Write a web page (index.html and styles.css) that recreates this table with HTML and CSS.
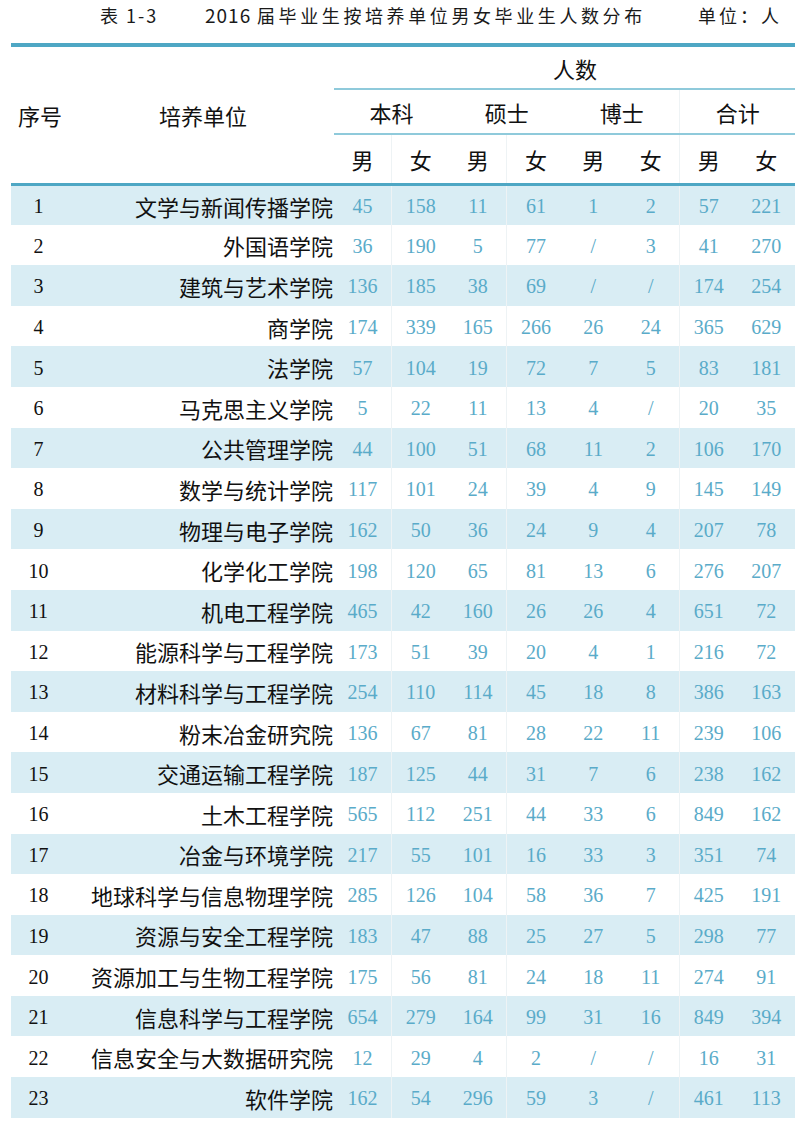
FILE: index.html
```html
<!DOCTYPE html>
<html lang="zh-CN">
<head>
<meta charset="utf-8">
<title>表 1-3</title>
<link rel="stylesheet" href="styles.css">
</head>
<body>
<div class="title"><span class="t-no">表 1-3</span><span class="t-year">2016</span><span class="t-main">届毕业生按培养单位男女毕业生人数分布</span><span class="t-unit">单位：人</span></div>
<table class="grid">
<colgroup><col class="w-no"><col class="w-name"><col class="w-n"><col class="w-n"><col class="w-n"><col class="w-n"><col class="w-n"><col class="w-n"><col class="w-n"><col class="w-n"></colgroup>
<thead>
<tr class="h1"><th rowspan="3" class="hc-no">序号</th><th rowspan="3" class="hc-name">培养单位</th><th colspan="8" class="h-span">人数</th></tr>
<tr class="h2"><th colspan="2">本科</th><th colspan="2">硕士</th><th colspan="2">博士</th><th colspan="2" class="sep">合计</th></tr>
<tr class="h3"><th>男</th><th class="sep">女</th><th>男</th><th class="sep">女</th><th>男</th><th>女</th><th class="sep">男</th><th>女</th></tr>
</thead>
<tbody>
<tr class="band"><td class="no">1</td><td class="name">文学与新闻传播学院</td><td>45</td><td class="sep">158</td><td>11</td><td class="sep">61</td><td>1</td><td>2</td><td class="sep">57</td><td>221</td></tr>
<tr><td class="no">2</td><td class="name">外国语学院</td><td>36</td><td class="sep">190</td><td>5</td><td class="sep">77</td><td>/</td><td>3</td><td class="sep">41</td><td>270</td></tr>
<tr class="band"><td class="no">3</td><td class="name">建筑与艺术学院</td><td>136</td><td class="sep">185</td><td>38</td><td class="sep">69</td><td>/</td><td>/</td><td class="sep">174</td><td>254</td></tr>
<tr><td class="no">4</td><td class="name">商学院</td><td>174</td><td class="sep">339</td><td>165</td><td class="sep">266</td><td>26</td><td>24</td><td class="sep">365</td><td>629</td></tr>
<tr class="band"><td class="no">5</td><td class="name">法学院</td><td>57</td><td class="sep">104</td><td>19</td><td class="sep">72</td><td>7</td><td>5</td><td class="sep">83</td><td>181</td></tr>
<tr><td class="no">6</td><td class="name">马克思主义学院</td><td>5</td><td class="sep">22</td><td>11</td><td class="sep">13</td><td>4</td><td>/</td><td class="sep">20</td><td>35</td></tr>
<tr class="band"><td class="no">7</td><td class="name">公共管理学院</td><td>44</td><td class="sep">100</td><td>51</td><td class="sep">68</td><td>11</td><td>2</td><td class="sep">106</td><td>170</td></tr>
<tr><td class="no">8</td><td class="name">数学与统计学院</td><td>117</td><td class="sep">101</td><td>24</td><td class="sep">39</td><td>4</td><td>9</td><td class="sep">145</td><td>149</td></tr>
<tr class="band"><td class="no">9</td><td class="name">物理与电子学院</td><td>162</td><td class="sep">50</td><td>36</td><td class="sep">24</td><td>9</td><td>4</td><td class="sep">207</td><td>78</td></tr>
<tr><td class="no">10</td><td class="name">化学化工学院</td><td>198</td><td class="sep">120</td><td>65</td><td class="sep">81</td><td>13</td><td>6</td><td class="sep">276</td><td>207</td></tr>
<tr class="band"><td class="no">11</td><td class="name">机电工程学院</td><td>465</td><td class="sep">42</td><td>160</td><td class="sep">26</td><td>26</td><td>4</td><td class="sep">651</td><td>72</td></tr>
<tr><td class="no">12</td><td class="name">能源科学与工程学院</td><td>173</td><td class="sep">51</td><td>39</td><td class="sep">20</td><td>4</td><td>1</td><td class="sep">216</td><td>72</td></tr>
<tr class="band"><td class="no">13</td><td class="name">材料科学与工程学院</td><td>254</td><td class="sep">110</td><td>114</td><td class="sep">45</td><td>18</td><td>8</td><td class="sep">386</td><td>163</td></tr>
<tr><td class="no">14</td><td class="name">粉末冶金研究院</td><td>136</td><td class="sep">67</td><td>81</td><td class="sep">28</td><td>22</td><td>11</td><td class="sep">239</td><td>106</td></tr>
<tr class="band"><td class="no">15</td><td class="name">交通运输工程学院</td><td>187</td><td class="sep">125</td><td>44</td><td class="sep">31</td><td>7</td><td>6</td><td class="sep">238</td><td>162</td></tr>
<tr><td class="no">16</td><td class="name">土木工程学院</td><td>565</td><td class="sep">112</td><td>251</td><td class="sep">44</td><td>33</td><td>6</td><td class="sep">849</td><td>162</td></tr>
<tr class="band"><td class="no">17</td><td class="name">冶金与环境学院</td><td>217</td><td class="sep">55</td><td>101</td><td class="sep">16</td><td>33</td><td>3</td><td class="sep">351</td><td>74</td></tr>
<tr><td class="no">18</td><td class="name">地球科学与信息物理学院</td><td>285</td><td class="sep">126</td><td>104</td><td class="sep">58</td><td>36</td><td>7</td><td class="sep">425</td><td>191</td></tr>
<tr class="band"><td class="no">19</td><td class="name">资源与安全工程学院</td><td>183</td><td class="sep">47</td><td>88</td><td class="sep">25</td><td>27</td><td>5</td><td class="sep">298</td><td>77</td></tr>
<tr><td class="no">20</td><td class="name">资源加工与生物工程学院</td><td>175</td><td class="sep">56</td><td>81</td><td class="sep">24</td><td>18</td><td>11</td><td class="sep">274</td><td>91</td></tr>
<tr class="band"><td class="no">21</td><td class="name">信息科学与工程学院</td><td>654</td><td class="sep">279</td><td>164</td><td class="sep">99</td><td>31</td><td>16</td><td class="sep">849</td><td>394</td></tr>
<tr><td class="no">22</td><td class="name">信息安全与大数据研究院</td><td>12</td><td class="sep">29</td><td>4</td><td class="sep">2</td><td>/</td><td>/</td><td class="sep">16</td><td>31</td></tr>
<tr class="band"><td class="no">23</td><td class="name">软件学院</td><td>162</td><td class="sep">54</td><td>296</td><td class="sep">59</td><td>3</td><td>/</td><td class="sep">461</td><td>113</td></tr>
</tbody>
</table>
</body>
</html>
```
FILE: styles.css
```css
html, body {
  margin: 0;
  padding: 0;
  background: #ffffff;
}

body {
  font-family: "Noto Sans CJK SC", "Noto Sans", sans-serif;
  color: #111111;
}

.title {
  height: 43px;
  box-sizing: border-box;
  padding: 3px 0 0 100px;
  display: flex;
  align-items: flex-start;
  line-height: 24px;
  font-size: 18px;
  font-weight: 400;
  color: #1a1a1a;
  white-space: nowrap;
}

.title span {
  flex: none;
  display: block;
}

.t-no {
  width: 105px;
  letter-spacing: 2px;
}

.t-year {
  width: 52px;
  font-size: 19px;
  letter-spacing: 1px;
}

.t-main {
  width: 441px;
  letter-spacing: 3.6px;
}

.t-unit {
  letter-spacing: 3px;
}

.grid {
  margin-left: 11px;
  width: 784px;
  table-layout: fixed;
  border-collapse: collapse;
  border-spacing: 0;
}

.w-no { width: 55px; }
.w-name { width: 268px; }
.w-n { width: 57.625px; }

th {
  font-weight: 400;
  font-size: 22px;
  padding: 0;
  text-align: center;
  vertical-align: middle;
}

.h1 th {
  border-top: 4px solid #4ea7c4;
}

.h1 {
  height: 44px;
}

.h2 {
  height: 45px;
}

.h3 {
  height: 50px;
}

.h-span {
  padding-left: 21px;
  border-bottom: 2px solid #8fcadb;
}

.h2 th {
  border-bottom: 2px solid #8fcadb;
}

.h3 th,
.hc-no,
.hc-name {
  border-bottom: 3px solid #4ea7c4;
}

.hc-no {
  padding-left: 3px;
}

.hc-name {
  padding-left: 6px;
}

.sep {
  border-left: 1px solid #eef3f5;
}

tbody tr {
  height: 40.6px;
}

tbody tr.band td {
  background: #d9edf4;
}

td {
  padding: 3px 0 0;
  text-align: center;
  vertical-align: middle;
  font-family: "Liberation Serif", "Times New Roman", serif;
  font-size: 20px;
  color: #5aabc9;
  white-space: nowrap;
}

td.no {
  color: #111111;
}

td.name {
  font-family: "Noto Sans CJK SC", "Noto Sans", sans-serif;
  font-size: 22px;
  color: #111111;
  text-align: right;
  padding-right: 1px;
  padding-top: 1px;
}
```
